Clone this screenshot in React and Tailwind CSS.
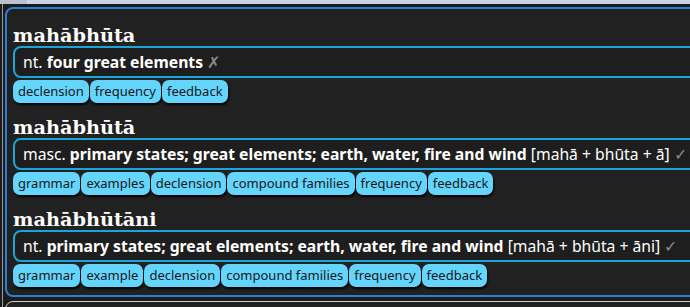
import React from "react";

const entries = [
  {
    word: "mahābhūta",
    pos: "nt.",
    meaning: "four great elements",
    construction: "",
    mark: "✗",
    buttons: ["declension", "frequency", "feedback"],
  },
  {
    word: "mahābhūtā",
    pos: "masc.",
    meaning: "primary states; great elements; earth, water, fire and wind",
    construction: "[mahā + bhūta + ā]",
    mark: "✓",
    buttons: ["grammar", "examples", "declension", "compound families", "frequency", "feedback"],
  },
  {
    word: "mahābhūtāni",
    pos: "nt.",
    meaning: "primary states; great elements; earth, water, fire and wind",
    construction: "[mahā + bhūta + āni]",
    mark: "✓",
    buttons: ["grammar", "example", "declension", "compound families", "frequency", "feedback"],
  },
];

function Entry({ entry }) {
  return (
    <div>
      <h2 className="font-['DejaVu_Serif',serif] text-[19.3px] font-bold leading-[21px] text-white">
        {entry.word}
      </h2>
      <div className="h-[32px] rounded-lg border-2 border-[#1ba6da] bg-[#1e1e1e] px-[8px] text-[15.7px] leading-[28px] text-white">
        {entry.pos} <b className="font-bold">{entry.meaning}</b>
        {entry.construction && <span> {entry.construction}</span>}{" "}
        <span className="text-[#8a8a8a]">{entry.mark}</span>
      </div>
      <div className="mt-[2px] flex gap-[1px]">
        {entry.buttons.map((b) => (
          <button
            key={b}
            type="button"
            className="h-[23px] rounded-[7px] bg-[#64d6fd] px-[5px] text-[13px] leading-[23px] text-[#161616] shadow-[1px_2px_2px_rgba(0,0,0,0.95)]"
          >
            {b}
          </button>
        ))}
      </div>
    </div>
  );
}

export default function App() {
  return (
    <div className="h-[307px] w-[690px] overflow-hidden bg-[#1b1b1b] font-['Noto_Sans',sans-serif]">
      <div className="flex h-[4px]">
        <div className="w-[27px] bg-[#b9c3cf]" />
        <div className="flex-1 bg-[#c9d6e7]" />
      </div>
      <div className="ml-[2px] h-[303px] border-l border-[#9a9a9a] pl-[2px] pt-[3px]">
        <div className="w-[740px] rounded-lg border-2 border-[#2b7fd6] bg-[#212121] px-[6px] pb-[8px] pt-[16px]">
          <div className="flex flex-col gap-[14px]">
            {entries.map((e) => (
              <Entry key={e.word} entry={e} />
            ))}
          </div>
        </div>
        <div className="mt-[4px] h-[20px] w-[740px] rounded-lg border border-[#cfcfcf] bg-[#212121]" />
      </div>
    </div>
  );
}
